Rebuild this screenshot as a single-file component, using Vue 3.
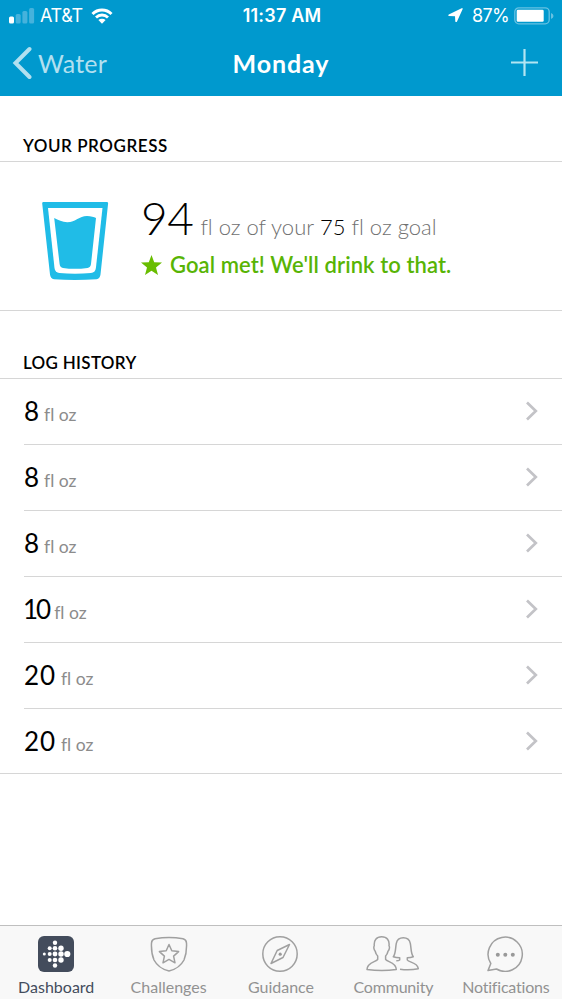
<template>
    <div class="screen">
        <header class="top">
            <div class="status-bar">
                <div class="status-left">
                    <svg class="signal" width="26" height="16" viewBox="0 0 26 16">
                        <rect x="0" y="8.5" width="5" height="7" rx="1.5" fill="#fff" />
                        <rect x="6.7" y="6" width="5" height="9.5" rx="1.5" fill="#45b2dc" />
                        <rect x="13.4" y="3" width="5" height="12.5" rx="1.5" fill="#45b2dc" />
                        <rect x="20.1" y="0" width="5" height="15.5" rx="1.5" fill="#45b2dc" />
                    </svg>
                    <span class="carrier">AT&amp;T</span>
                    <svg class="wifi" width="22" height="16" viewBox="0 0 22 16">
                        <path d="M1.5 6a13.4 13.4 0 0 1 19 0" fill="none" stroke="#fff" stroke-width="3" />
                        <path d="M5 9.5a8.5 8.5 0 0 1 12 0" fill="none" stroke="#fff" stroke-width="2.8" />
                        <path d="M7.4 12.1a5.2 5.2 0 0 1 7.2 0L11 15.8z" fill="#fff" />
                    </svg>
                </div>
                <div class="clock">11:37 AM</div>
                <div class="status-right">
                    <svg width="15" height="15" viewBox="0 0 15 15">
                        <path d="M14.8.8 8.9 13.8Q7.8 14.6 7.3 13.4L7 8.300.800 8Q-.4 7.300.800 6.500L13.600.3Q15 0 14.800.8z" fill="#fff" />
                    </svg>
                    <span class="percent">87%</span>
                    <svg class="battery" width="40" height="18" viewBox="0 0 40 18">
                        <rect x=".8" y=".8" width="34.4" height="16" rx="4" fill="none" stroke="#66c1e2" stroke-width="1.3" />
                        <rect x="2.7" y="2.7" width="27" height="12" rx="1.2" fill="#fff" />
                        <path d="M37 6q2.5.8 2.500 3T37 12z" fill="#66c1e2" />
                    </svg>
                </div>
            </div>
            <nav class="nav-bar">
                <button class="back">
                    <svg width="20" height="34" viewBox="0 0 20 34">
                        <path d="M17.5 3 3.500 17l14 14" fill="none" stroke="#b2e0f0" stroke-width="4" stroke-linecap="round" />
                    </svg>
                    <span>Water</span>
                </button>
                <h1 class="title">Monday</h1>
                <button class="add">
                    <svg width="27" height="27" viewBox="0 0 27 27">
                        <path d="M13.5 0v27M0 13.500h27" stroke="#b2e5f2" stroke-width="2.200" />
                    </svg>
                </button>
            </nav>
        </header>

        <main class="content">
            <h2 class="section-title progress-title">YOUR PROGRESS</h2>
            <section class="progress">
                <svg class="glass" width="67" height="79" viewBox="0 0 67 79">
                    <path d="M1.5 0h63.300q1.500 0 1.300 1.500L58.500 72.500q-.5 4.200-4 4.800-22 1.500-42.500 0-3.500-.6-4-4.800L.2 1.500Q0 0 1.500 0z" fill="#20bce7" />
                    <path d="M6 6h54.500l-6.600 60q-.5 4.500-5 5-16 1.600-31.500 0-4.300-.5-4.900-5z" fill="#fff" />
                    <path d="M12.200 16c4 2 8 4.200 13 4.200C34 20.200 37 14 45 14c4 0 7 1 9 2L49 62q-.4 3.500-3.500 4-13 1.700-24.500 0-3-.4-3.400-4z" fill="#20bce7" />
                </svg>
                <div class="progress-text">
                    <p class="amount">
                        <span class="total">94</span>
                        <span class="muted">fl oz of your</span>
                        <span class="goal">75</span>
                        <span class="muted">fl oz goal</span>
                    </p>
                    <p class="goal-met">
                        <svg width="21" height="21" viewBox="0 0 21 21">
                            <path d="M10.500 0 13.200 7.200 21 7.600 15 12.500 17 20 10.500 15.800 4 20 6 12.500 0 7.600 7.800 7.200z" fill="#69bd00" />
                        </svg>
                        <span>Goal met! We'll drink to that.</span>
                    </p>
                </div>
            </section>

            <h2 class="section-title history-title">LOG HISTORY</h2>
            <ul class="history">
                <li v-for="(entry, index) in entries" :key="index" class="entry">
                    <span class="entry-amount" :class="{ narrow: entry === 10, wide: entry === 20 }">{{ entry }}</span>
                    <span class="entry-unit">fl oz</span>
                    <svg class="chevron" width="14" height="20" viewBox="0 0 14 20">
                        <path d="M2 1.500 10.800 10 2 18.500" fill="none" stroke="#c3c3c7" stroke-width="2.700" />
                    </svg>
                </li>
            </ul>
        </main>

        <footer class="tab-bar">
            <a class="tab active">
                <svg width="36" height="36" viewBox="0 0 36 36">
                    <rect width="36" height="36" rx="6" fill="#434c5c" />
                    <circle v-for="(dot, index) in logoDots" :key="index" :cx="dot[0]" :cy="dot[1]" :r="dot[2]" fill="#fff" />
                </svg>
                <span class="dashboard-label">Dashboard</span>
            </a>
            <a class="tab">
                <svg class="outline" width="38" height="36" viewBox="0 0 38 36">
                    <path d="M5 2.800Q19 0 33 2.800q3.300.8 3.500 4.200.5 10-2.500 17-4.500 8.500-15 11-10.500-2.500-15-11-3-7-2.500-17Q1.700 3.600 5 2.800z" />
                    <path d="m19 8.500 2.800 6.200 6.800.9-5 4.500 1.400 6.700-6-3.400-6 3.400 1.400-6.700-5-4.500 6.800-.9z" />
                </svg>
                <span class="challenges-label">Challenges</span>
            </a>
            <a class="tab">
                <svg class="outline" width="38" height="36" viewBox="0 0 38 36">
                    <circle cx="18" cy="18" r="17.200" />
                    <path d="M27.500 8.500 21 21.500 9 27.500 15.200 14.500z" />
                    <circle cx="18.200" cy="18.200" r="1.600" class="solid" />
                </svg>
                <span class="guidance-label">Guidance</span>
            </a>
            <a class="tab">
                <svg class="outline" width="54" height="36" viewBox="0 0 54 36">
                    <path d="M15.700.8c5.300 0 8 3.600 7.300 8.900.9 1 .4 4.300-.9 5.300-.6 2.500-1.400 4-2.500 5v3.300c1.300 2.700 10.700 2.700 10.700 10.200-9.500 1.200-19.500 1.200-29.300 0 0-7.500 9.400-7.500 10.700-10.200V20c-1.200-1-2-2.500-2.600-5-1.200-1-1.700-4.300-.8-5.300C7.700 4.400 10.400.8 15.700.8z" />
                    <path d="M30.300 24.700c1 0 2.500 0 3.400-.7v-2.200c-2 0-4.300-.2-6.400-1.100 2.600-3.200 2-8.700 3-13.400.7-3.500 3.200-5.500 7-5.500s6.300 2 7 5.500c1 4.700.4 10.200 3 13.400-1.900.8-3.900 1.100-6 1.100V24c1.500 2.700 10.300 2 11 8.700-5.800 1.300-12.300 1.400-18.300.6" />
                </svg>
                <span class="community-label">Community</span>
            </a>
            <a class="tab">
                <svg class="outline" width="37" height="36" viewBox="0 0 37 36">
                    <path d="M3.800 27.500A17.100 17.100 0 1 1 9.500 33L1 34.600z" />
                    <circle cx="10.800" cy="18.800" r="2" class="solid" />
                    <circle cx="18.300" cy="18.800" r="2" class="solid" />
                    <circle cx="25.800" cy="18.800" r="2" class="solid" />
                </svg>
                <span class="notifications-label">Notifications</span>
            </a>
        </footer>
    </div>
</template>

<script setup>
import { ref } from 'vue'

const entries = ref([8, 8, 8, 10, 20, 20])

// x, y and radius of each dot in the dashboard logo
const logoDots = [
    [6.3, 18, 1.5],
    [11.7, 12.3, 2], [11.7, 18, 2], [11.7, 24, 2],
    [17, 6.8, 2.2], [17, 12.3, 2.3], [17, 18, 2.4], [17, 24, 2.3], [17, 29.5, 2.2],
    [23, 12.3, 2.7], [23, 18, 2.7], [23, 24, 2.7],
    [29.3, 18, 3.1],
]
</script>

<style>
body {
    margin: 0;
    background: #fff;
}
</style>

<style scoped>
.screen {
    display: flex;
    flex-direction: column;
    width: 562px;
    height: 999px;
    overflow: hidden;
    font-family: Lato, "Open Sans", sans-serif;
    font-variant-ligatures: none;
    color: #000;
    background: #fff;
}

.screen * {
    box-sizing: border-box;
}

svg {
    display: block;
    flex: none;
}

h1,
h2,
p,
ul {
    margin: 0;
    padding: 0;
}

button {
    padding: 0;
    border: 0;
    background: none;
    font: inherit;
}

.top {
    flex: none;
    height: 96px;
    color: #fff;
    background: #0099ce;
}

.status-bar {
    display: grid;
    grid-template-columns: 1fr auto 1fr;
    align-items: center;
    height: 31px;
    padding: 0 8px;
    font-family: Inter, sans-serif;
    font-size: 18px;
}

.status-left,
.status-right {
    display: flex;
    align-items: center;
}

.status-right {
    justify-content: flex-end;
}

.signal {
    margin: 0 5px 0 1px;
}

.carrier {
    letter-spacing: -0.3px;
}

.wifi {
    margin-left: 8px;
}

.clock {
    margin-left: 2px;
    font-weight: 600;
    letter-spacing: 0.2px;
}

.percent {
    margin: 0 5px 0 9px;
    letter-spacing: -0.7px;
}

.nav-bar {
    display: grid;
    grid-template-columns: 1fr auto 1fr;
    align-items: center;
    height: 63px;
    padding: 0 12px;
}

.back {
    display: flex;
    align-items: center;
    gap: 6px;
    color: #b2e0f0;
    font-size: 25px;
    letter-spacing: 0.2px;
}

.title {
    font-size: 25px;
    font-weight: 700;
    letter-spacing: 0.9px;
}

.add {
    justify-self: end;
    margin: 0 12px 1px 0;
}

.section-title {
    display: flex;
    align-items: flex-end;
    padding: 0 0 5px 23px;
    border-bottom: 1px solid #d6d6d6;
    font-size: 17px;
    line-height: 21px;
    font-weight: 600;
}

.progress-title {
    height: 66px;
    letter-spacing: 0.55px;
}

.history-title {
    height: 68px;
    letter-spacing: 0.3px;
}

.progress {
    display: flex;
    height: 149px;
    padding: 40px 0 0 42px;
    border-bottom: 1px solid #d6d6d6;
}

.progress-text {
    margin-left: 32px;
}

.amount {
    display: flex;
    align-items: baseline;
    height: 52px;
    font-size: 22px;
    line-height: 32px;
    white-space: nowrap;
}

.total {
    margin-right: 7px;
    font-size: 46px;
    font-weight: 300;
    letter-spacing: -0.5px;
}

.muted {
    color: #707070;
    font-weight: 300;
}

.goal {
    margin: 0 6px;
    font-weight: 300;
}

.goal-met {
    display: flex;
    align-items: center;
    gap: 8px;
    height: 22px;
    color: #58b405;
    font-size: 22px;
    font-weight: 600;
    letter-spacing: 0.08px;
    line-height: 22px;
    white-space: nowrap;
}

.history {
    list-style: none;
    border-bottom: 1px solid #d6d6d6;
}

.entry {
    display: flex;
    align-items: baseline;
    height: 66px;
    margin-left: 24px;
    padding-right: 23px;
    border-bottom: 1px solid #d6d6d6;
    line-height: 65px;
}

.entry:last-child {
    height: 64px;
    border-bottom: 0;
}

.entry-amount {
    font-size: 26px;
}

.entry-amount.narrow {
    margin-left: -1px;
    letter-spacing: -2px;
}

.entry-amount.wide {
    letter-spacing: 0.9px;
}

.entry-unit {
    margin-left: 5px;
    color: #8c8c8c;
    font-size: 17.5px;
}

.chevron {
    align-self: center;
    margin: 0 0 1px auto;
}

.tab-bar {
    display: flex;
    height: 74px;
    margin-top: auto;
    border-top: 1px solid #bfbfbf;
    background: #f8f8f8;
}

.tab {
    display: flex;
    flex: 1;
    flex-direction: column;
    align-items: center;
    padding-top: 10px;
    color: #929292;
    font-size: 16px;
    line-height: 20px;
}

.tab span {
    margin-top: 5px;
}

.tab.active {
    color: #434c5c;
}

.notifications-label {
    letter-spacing: -0.2px;
}

.community-label {
    letter-spacing: -0.2px;
}

.outline {
    fill: none;
    stroke: #a0a0a0;
    stroke-width: 1.5;
    stroke-linejoin: round;
}

.outline .solid {
    fill: #999;
    stroke: none;
}
</style>
